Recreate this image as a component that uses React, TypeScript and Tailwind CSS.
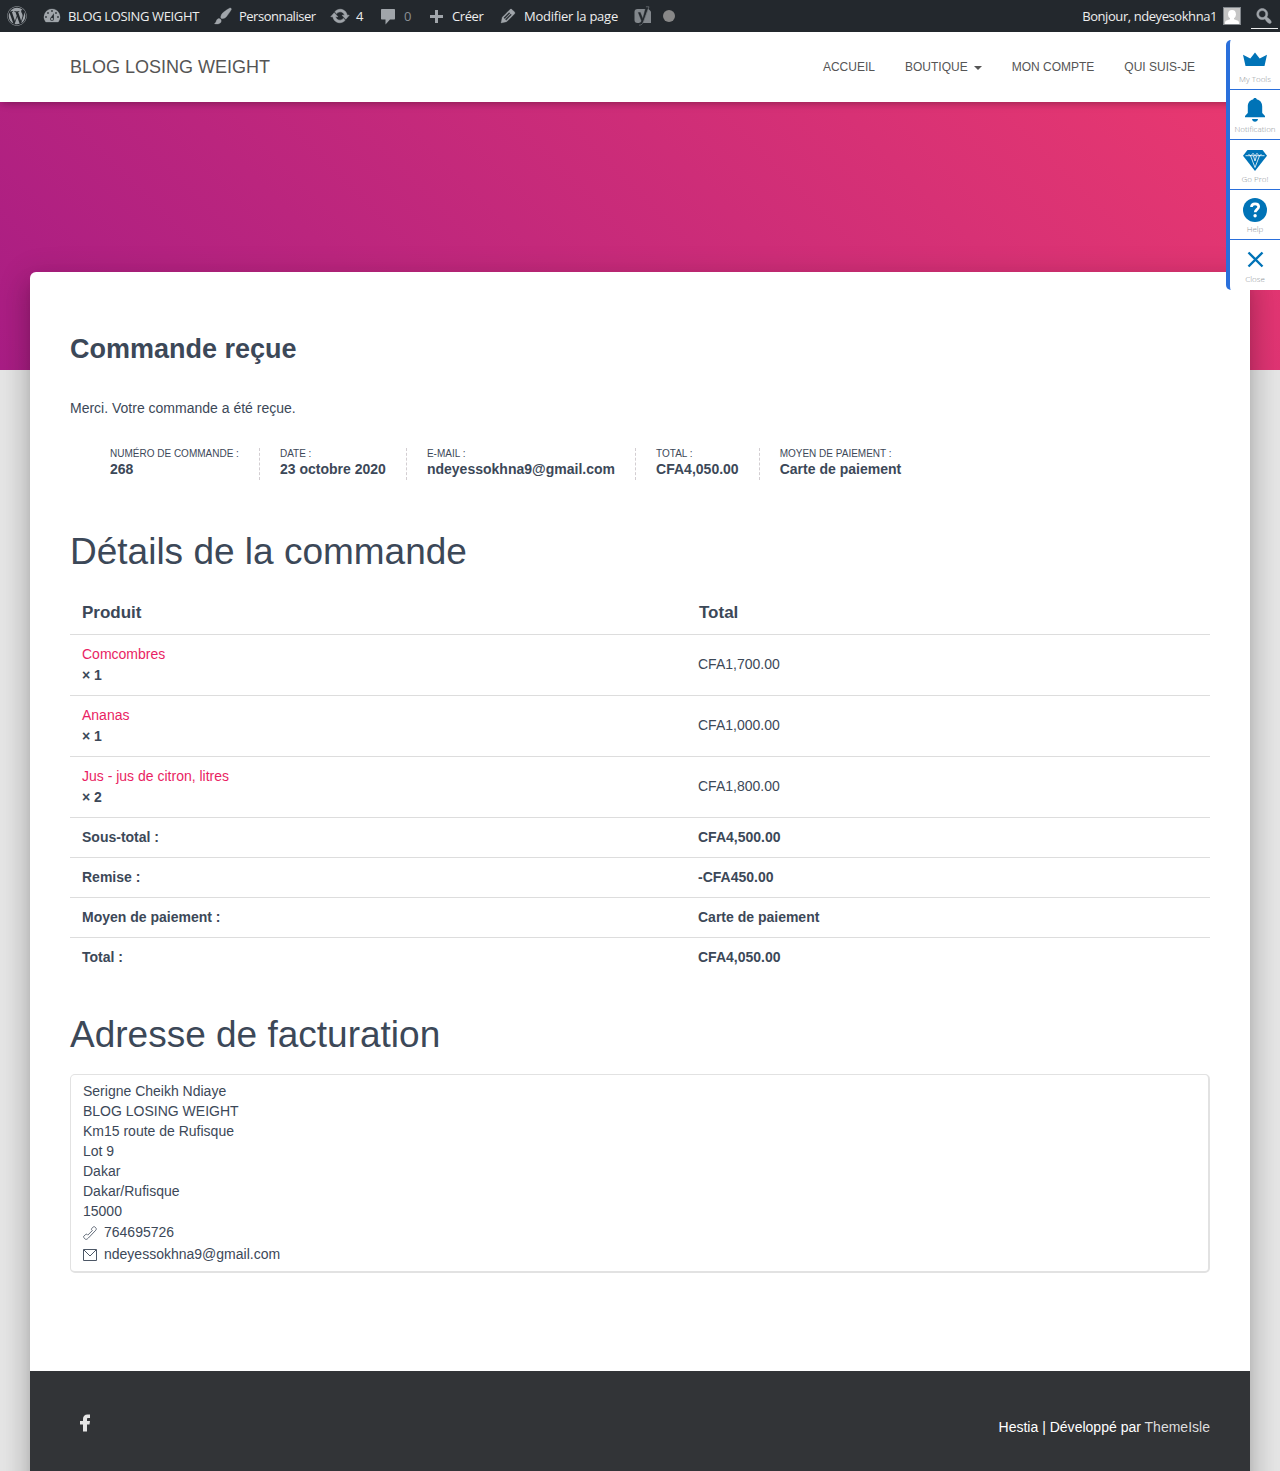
import React from "react";
import { FaWordpress } from "react-icons/fa";

const ICONS = {
  dashboard:
    "M3.76 16h12.48A7.998 7.998 0 0 0 10 3a7.998 7.998 0 0 0-6.24 13zM10 4c.55 0 1 .45 1 1s-.45 1-1 1-1-.45-1-1 .45-1 1-1zM6 6c.55 0 1 .45 1 1s-.45 1-1 1-1-.45-1-1 .45-1 1-1zm8 0c.55 0 1 .45 1 1s-.45 1-1 1-1-.45-1-1 .45-1 1-1zm-5.37 5.55L12 7v6c0 1.1-.9 2-2 2s-2-.9-2-2c0-.57.24-1.08.63-1.45zM4 10c.55 0 1 .45 1 1s-.45 1-1 1-1-.45-1-1 .45-1 1-1zm12 0c.55 0 1 .45 1 1s-.45 1-1 1-1-.45-1-1 .45-1 1-1zm-5 3c0-.55-.45-1-1-1s-1 .45-1 1 .45 1 1 1 1-.45 1-1z",
  brush:
    "M18.33 3.57s.27-.8-.31-1.36c-.53-.52-1.22-.24-1.22-.24-.61.3-5.76 3.47-7.67 5.57-.86.96-2.06 3.79-1.09 4.82.92.98 3.96-.17 4.79-1 2.06-2.06 5.21-7.17 5.5-7.79zM1.4 17.65c2.37-1.56 1.46-3.41 3.23-4.64.93-.65 2.22-.62 3.08.29.63.67.8 2.57-.16 3.46-1.57 1.45-4 1.55-6.15.89z",
  update:
    "M10.2 3.28c3.53 0 6.43 2.61 6.92 6h2.08l-3.5 4-3.5-4h2.32c-.45-1.97-2.21-3.45-4.32-3.45-1.45 0-2.73.71-3.54 1.78L4.95 5.66C6.23 4.2 8.11 3.28 10.2 3.28zm-.4 13.44c-3.52 0-6.43-2.61-6.92-6H.8l3.5-4c1.17 1.33 2.33 2.67 3.5 4H5.48c.45 1.97 2.21 3.45 4.32 3.45 1.45 0 2.73-.71 3.54-1.78l1.71 1.95c-1.28 1.46-3.15 2.38-5.25 2.38z",
  comment:
    "M4 3h12c.8 0 1 .5 1 1v8.500c0 .6-.4 1-1 1h-4L7.500 18.500v-5H4c-.6 0-1-.4-1-1V4c0-.6.4-1 1-1z",
  plus: "M17 9v3h-5v5H9v-5H4V9h5V4h3v5h5z",
  edit: "M13.89 3.39l2.71 2.72c.46.46.42 1.24.03 1.64l-8.01 8.02-5.56 1.16 1.16-5.58s7.6-7.63 7.99-8.03c.39-.39 1.22-.39 1.68.07zm-2.73 2.79l-5.59 5.61 1.11 1.11 5.54-5.65zm-2.97 8.23l5.58-5.6-1.07-1.08-5.59 5.6z",
  search:
    "M12.14 4.18c1.87 1.87 2.11 4.75.72 6.89.12.1.22.21.36.31.2.16.47.36.81.59.34.24.56.39.66.47.42.31.73.57.94.78.32.32.6.65.84 1 .25.35.44.69.59 1.04.14.35.21.68.18 1-.02.32-.14.59-.36.81s-.49.34-.81.36c-.31.02-.65-.04-.99-.19-.35-.14-.7-.34-1.04-.59-.35-.24-.68-.52-1-.84-.21-.21-.47-.52-.77-.93-.1-.13-.25-.35-.47-.66-.22-.32-.4-.57-.56-.78-.16-.2-.29-.35-.44-.5-2.07 1.09-4.69.76-6.44-.98-2.14-2.15-2.14-5.64 0-7.78 2.15-2.15 5.63-2.15 7.78 0zm-1.41 6.36c1.36-1.37 1.36-3.58 0-4.95-1.37-1.37-3.59-1.37-4.95 0-1.37 1.37-1.37 3.58 0 4.95 1.36 1.37 3.58 1.37 4.95 0z",
};

function DashIcon({ d, weight = 0.3 }: { d: string; weight?: number }) {
  return (
    <svg
      viewBox="0 0 20 20"
      className="size-5 shrink-0 text-[#a0a5aa]"
      fill="currentColor"
      fillRule="evenodd"
      stroke="currentColor"
      strokeWidth={weight}
    >
      <path d={d} />
    </svg>
  );
}

function BarItem({ d, label, width, text, weight }: { d: string; label: string; width: string; text: string; weight?: number }) {
  return (
    <div className={`flex shrink-0 items-center gap-1.5 whitespace-nowrap pl-[7px] ${width}`}>
      <DashIcon d={d} weight={weight} />
      <span className={text}>{label}</span>
    </div>
  );
}

function AdminBar() {
  return (
    <div className="flex h-8 shrink-0 items-stretch bg-[#23282d] font-['Open_Sans',sans-serif] text-[13px] text-[#eee]">
      <div className="flex w-[35px] shrink-0 items-center pl-[7px]">
        <FaWordpress className="size-5 text-[#a0a5aa]" />
      </div>
      <BarItem d={ICONS.dashboard} label="BLOG LOSING WEIGHT" width="w-[171px]" text="tracking-[-0.36px]" />
      <BarItem d={ICONS.brush} label="Personnaliser" width="w-[117px]" text="tracking-[-0.5px]" />
      <BarItem d={ICONS.update} label="4" width="w-[48px]" text="" weight={0.6} />
      <BarItem d={ICONS.comment} label="0" width="w-[48px]" text="text-[#8a8f94]" weight={0} />
      <BarItem d={ICONS.plus} label="Créer" width="w-[72px]" text="tracking-[-0.4px]" weight={0} />
      <BarItem d={ICONS.edit} label="Modifier la page" width="w-[135px]" text="tracking-[-0.24px]" />
      <div className="flex items-center gap-2.5 pl-[7px]">
        <svg viewBox="0 0 20 20" className="size-5">
          <path d="M4.500 3h11L18 5.500V17H4.500C2.500 17 1.500 16 1.500 14V6C1.500 4 2.500 3 4.500 3z" fill="#82878c" />
          <path d="M12.900 1h2.900L10.300 15.800c-.9 2.200-2 3-4.100 3.100v-1.900c1.500-.2 2.200-1 2.200-2.400L5.300 6.500h2l2.500 6.300z" fill="#23282d" stroke="#23282d" strokeWidth=".4" />
          <path d="M12.900.8h3.100L10.400 16c-.9 2.200-2 3-4.300 3.200" fill="none" stroke="#82878c" strokeWidth=".6" />
        </svg>
        <span className="size-3 rounded-full bg-[#888]" />
      </div>
      <div className="ml-auto flex items-center whitespace-nowrap">
        <span className="tracking-[-0.43px]">Bonjour, ndeyesokhna1</span>
        <span className="ml-1.5 block size-[18px] border border-[#82878c] bg-[#c5c5c5]">
          <svg viewBox="0 0 16 16" className="size-4" fill="#fff">
            <ellipse cx="8" cy="6.200" rx="3.900" ry="4.300" />
            <path d="M6 9h4v2.200l4 1.500c.8.500 1 1.500 1 3.300H1c0-1.800.2-2.800 1-3.300l4-1.500z" />
          </svg>
        </span>
        <span className="ml-[10px] mr-0.5 flex h-[29px] w-[27px] items-end self-start border-b border-[#eee] pb-0.5 pl-[3px]">
          <DashIcon d={ICONS.search} weight={0.5} />
        </span>
      </div>
    </div>
  );
}

function Tool({ label, children, last }: { label: string; children: React.ReactNode; last?: boolean }) {
  return (
    <div className={`flex h-[50px] flex-col items-center pt-[7px] ${last ? "" : "border-b border-[#2a6fdb]"}`}>
      <svg viewBox="0 0 24 24" className="size-6 shrink-0 overflow-visible" fill="#0073b7">
        {children}
      </svg>
      <span className="mt-[3px] whitespace-nowrap text-[8px] font-light leading-[10px] text-[#8f9499]">{label}</span>
    </div>
  );
}

function ToolPanel() {
  return (
    <aside className="absolute right-0 top-10 h-[250px] w-[54px] rounded-l-[5px] border-l-4 border-[#2a6fdb] bg-white font-['Open_Sans',sans-serif]">
      <Tool label="My Tools">
        <path d="M0 7.800l7.300 3.700L12 5.600l4.700 5.900L24 7.800 21.500 19h-19z" />
      </Tool>
      <Tool label="Notification">
        <path d="M12 1c1 0 1.800.7 1.900 1.500C17.500 3.200 19.200 6 19.200 9.500V16l2.800 3v1.300H2V19l2.800-3V9.500C4.800 6 6.500 3.200 10.100 2.500 10.200 1.700 11 1 12 1zM9 22h6c-.3 1.800-1.400 2.800-3 2.800S9.300 23.800 9 22z" />
      </Tool>
      <Tool label="Go Pro!">
        <path d="M4.500 3h15L24 8.800 12 24 0 8.800z" />
        <path d="M2.500 8.700h19M7.500 8.700L12 20.500l4.500-11.800M5.500 7.500L8 8.700 10 6.300l2 2.400 2-2.400 2 2.400 2.500-1.200M10.500 9L12 14l1.500-5" fill="none" stroke="#fff" strokeWidth=".8" />
      </Tool>
      <Tool label="Help">
        <circle cx="12" cy="13" r="12" />
        <path d="M8.500 10c0-2 1.500-3.200 3.600-3.200s3.600 1.200 3.600 3c0 2.500-3.500 2.700-3.500 5.400" fill="none" stroke="#fff" strokeWidth="2.700" />
        <circle cx="12.100" cy="18.800" r="1.700" fill="#fff" />
      </Tool>
      <Tool label="Close" last>
        <path d="M5.500 5.500l14 14M19.500 5.500l-14 14" stroke="#0073b7" strokeWidth="2.400" />
      </Tool>
    </aside>
  );
}

const META = [
  ["Numéro de commande :", "268"],
  ["Date :", "23 octobre 2020"],
  ["E-mail :", "ndeyessokhna9@gmail.com"],
  ["Total :", "CFA4,050.00"],
  ["Moyen de paiement :", "Carte de paiement"],
];

const PRODUCTS = [
  ["Comcombres", "× 1", "CFA1,700.00"],
  ["Ananas", "× 1", "CFA1,000.00"],
  ["Jus - jus de citron, litres", "× 2", "CFA1,800.00"],
];

const TOTALS = [
  ["Sous-total :", "CFA4,500.00"],
  ["Remise :", "-CFA450.00"],
  ["Moyen de paiement :", "Carte de paiement"],
  ["Total :", "CFA4,050.00"],
];

const ADDRESS = [
  "Serigne Cheikh Ndiaye",
  "BLOG LOSING WEIGHT",
  "Km15 route de Rufisque",
  "Lot 9",
  "Dakar",
  "Dakar/Rufisque",
  "15000",
];

export default function App() {
  return (
    <div className="relative flex h-[1471px] w-[1280px] flex-col overflow-hidden bg-[#e5e5e5] font-['Liberation_Sans',Arial,sans-serif] text-sm text-[#3c4858]">
      <AdminBar />
      <nav className="relative z-10 flex h-[70px] shrink-0 items-center bg-white pl-[70px] pr-[85px] text-[#555] shadow-[0_1px_10px_-6px_rgba(0,0,0,.42),0_1px_10px_0_rgba(0,0,0,.12),0_4px_5px_-2px_rgba(0,0,0,.1)] [clip-path:inset(0_0_-20px_0)]">
        <span className="text-lg">BLOG LOSING WEIGHT</span>
        <div className="ml-auto flex gap-[30px] text-xs uppercase">
          <span>Accueil</span>
          <span className="flex items-center">
            Boutique
            <span className="ml-1.5 mt-0.5 border-x-4 border-t-4 border-x-transparent border-t-[#555]" />
          </span>
          <span>Mon compte</span>
          <span>Qui suis-je</span>
        </div>
      </nav>
      <header className="h-[268px] shrink-0 bg-[linear-gradient(45deg,#a81d84_0%,#ea396f_100%)]" />

      <div className="relative mx-[30px] -mt-[98px] flex h-[1240px] shrink-0 flex-col rounded-t-md bg-white shadow-[0_16px_24px_2px_rgba(0,0,0,.14),0_6px_30px_5px_rgba(0,0,0,.12),0_8px_10px_-5px_rgba(0,0,0,.2)]">
        <main className="h-[1099px] shrink-0 px-10 pt-[56px]">
          <h1 className="text-[27px] font-bold leading-[42px]">Commande reçue</h1>
          <p className="mt-[28px] leading-[21px]">Merci. Votre commande a été reçue.</p>
          <ul className="ml-10 mt-[29px] flex">
            {META.map(([label, value], i) => (
              <li
                key={label}
                className={`mr-5 h-8 pt-px ${i < META.length - 1 ? "border-r border-dashed border-[#d3ced2] pr-5" : ""}`}
              >
                <div className="text-[10px] uppercase leading-[10px]">{label}</div>
                <strong className="block whitespace-nowrap leading-[21px] tracking-[0.01px]">{value}</strong>
              </li>
            ))}
          </ul>

          <h2 className="mt-[44px] text-[37px] leading-[56px]">Détails de la commande</h2>
          <div className="mt-3 flex h-[42px] items-center text-[17px] font-bold">
            <span className="w-[629px] pl-3">Produit</span>
            <span>Total</span>
          </div>
          {PRODUCTS.map(([name, qty, total]) => (
            <div key={name} className="flex h-[61px] items-center border-t border-[#ddd]">
              <div className="w-[628px] pl-3 leading-[21px]">
                <a className="text-[#e91e63]">{name}</a>
                <strong className="block">{qty}</strong>
              </div>
              <span className="pb-0.5">{total}</span>
            </div>
          ))}
          {TOTALS.map(([name, total]) => (
            <div key={name} className="flex h-10 items-center border-t border-[#ddd] pb-0.5 font-bold">
              <span className="w-[628px] pl-3">{name}</span>
              <span>{total}</span>
            </div>
          ))}

          <h2 className="mt-[30px] text-[37px] leading-[56px]">Adresse de facturation</h2>
          <address className="mt-[11px] h-[199px] rounded-[5px] border border-b-2 border-r-2 border-[#e2e2e2] px-3 pt-1.5 not-italic leading-5">
            {ADDRESS.map((line) => (
              <div key={line}>{line}</div>
            ))}
            <div className="flex h-[22px] items-center gap-[7px]">
              <svg viewBox="0 0 14 14" className="size-3.5 translate-y-px" fill="none" stroke="#3c4858" strokeWidth=".8" strokeLinejoin="round">
                <path d="M.7 10.300l2.100-1.900c.5-.4 1-.3 1.500.2l.5.500 4.500-4.500-.6-.700c-.4-.4-.4-.9 0-1.300l1.600-1.700c.5-.5 1-.5 1.500 0l1 1c.7.700.6 1.600 0 2.300L5.300 12.100c-1 1-2 1.600-2.900 1.100L.7 11.500c-.4-.4-.4-.8 0-1.200z" />
              </svg>
              764695726
            </div>
            <div className="flex h-[22px] items-center gap-[7px]">
              <svg viewBox="0 0 14 14" className="size-3.5" fill="none" stroke="#4c5766">
                <path d="M.5 2.500h13v11H.5zM.8 2.800L7 9l6.200-6.200" />
              </svg>
              ndeyessokhna9@gmail.com
            </div>
          </address>
        </main>
        <footer className="flex flex-1 items-start justify-between bg-[#323437] px-10">
          <svg viewBox="0 0 10 18" className="ml-2.5 mt-[43px] h-[18px] w-2.5" fill="#e5e5e5">
            <path d="M3 17.500V10.500H0V7h3V5C3 2 4.800.5 7.500.5H10V4H8.200C7.300 4 7 4.400 7 5.200V7h3l-.5 3.500H7v7z" />
          </svg>
          <p className="mt-[46px] leading-5 tracking-[0.01px] text-white">
            Hestia | Développé par <a className="text-[#ddd]">ThemeIsle</a>
          </p>
        </footer>
      </div>
      <div className="absolute inset-x-0 top-0 z-20">
        <ToolPanel />
      </div>
    </div>
  );
}
